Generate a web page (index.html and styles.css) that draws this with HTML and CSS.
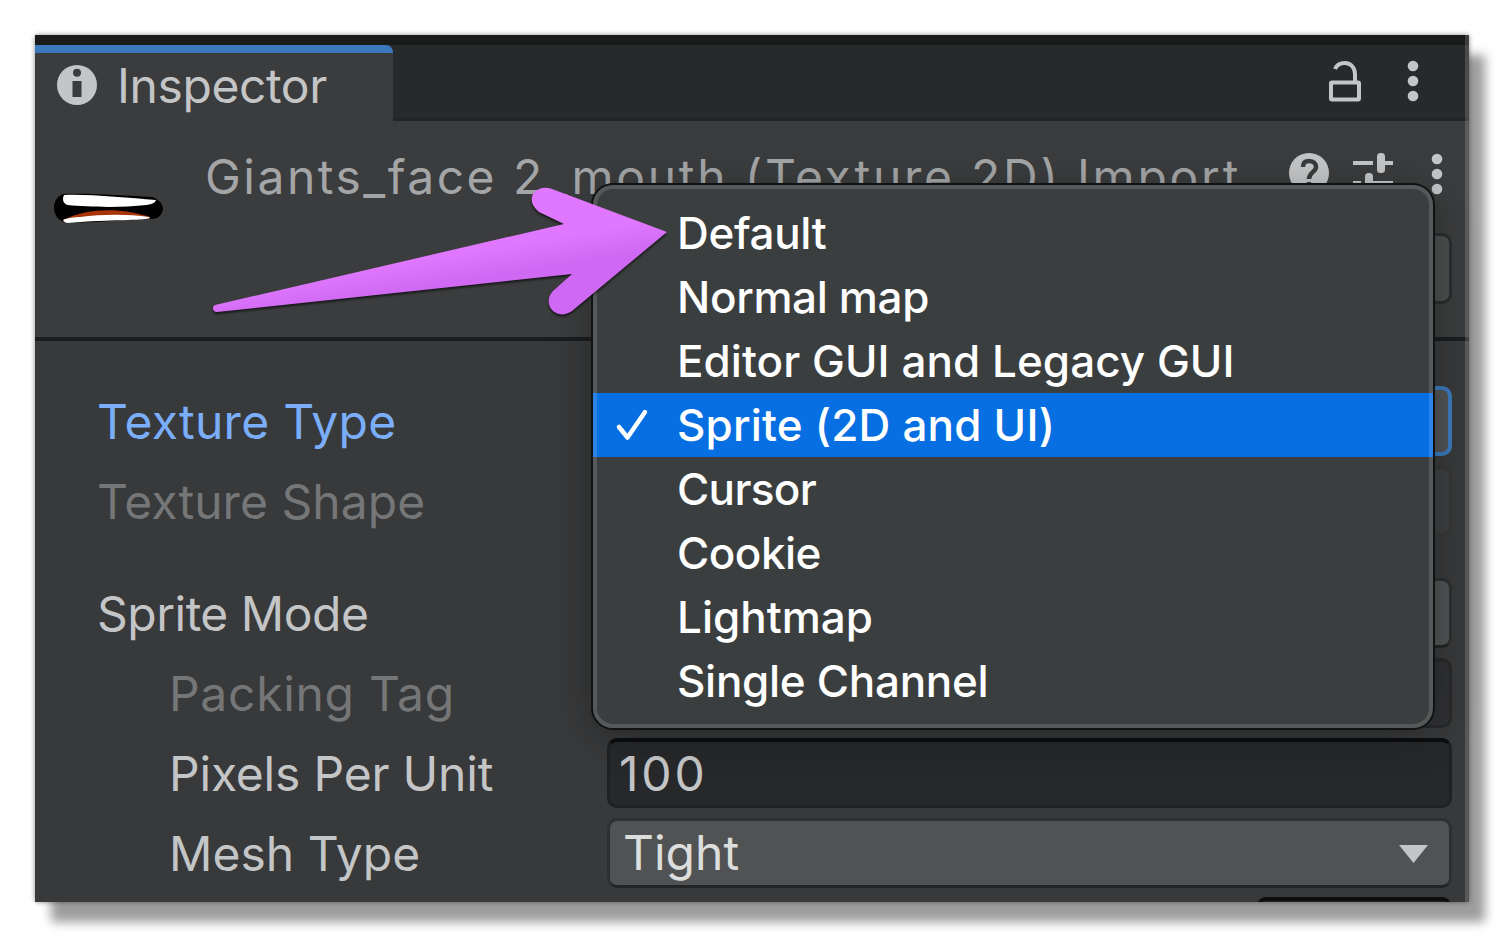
FILE: index.html
```html
<!DOCTYPE html>
<html lang="en">
<head>
<meta charset="utf-8">
<title>Inspector</title>
<link rel="stylesheet" href="styles.css">
</head>
<body>
<main class="panel">
  <nav class="tabs">
    <div class="tab">
      <svg class="info" width="40" height="40" viewBox="0 0 40 40"><circle cx="20" cy="20" r="20" fill="#c4c5c6"/><circle cx="20" cy="7.800" r="4" fill="#3a3b3c"/><path d="M15.500 16H24.500V32H15.500Z" fill="#3a3b3c"/></svg>
      <span class="t-inspector">Inspector</span>
    </div>
    <div class="tools">
      <svg width="34" height="42" viewBox="0 0 34 42" fill="none" stroke="#c4c5c6" stroke-width="4"><rect x="3" y="22.500" width="28" height="17" rx="1"/><path d="M7 9C9 4 13 3 17 3C23 3 27 8 27 14V22"/></svg>
      <svg width="12" height="42" viewBox="0 0 12 42" fill="#c4c5c6"><circle cx="6" cy="6" r="5.300"/><circle cx="6" cy="21" r="5.300"/><circle cx="6" cy="36" r="5.300"/></svg>
    </div>
  </nav>
  <header class="head">
    <svg class="thumb" width="112" height="34" viewBox="0 0 112 34"><path d="M11 2C40 1 74 4 100 5C106 8 110 12 110 17C109 24 104 27 98 27C70 27 40 32 12 30C5 29 1 22 1 16C1 9 5 3 11 2Z" fill="#000"/><path d="M11 3C38 2 74 6 103 8C102 11 99 12 94 13C66 16 35 15 15 13C10 12 9 7 11 3Z" fill="#fff"/><path d="M10 28C36 15 70 16 97 25L96 27C65 25 38 28 11 30Z" fill="#a83408"/><path d="M10 28C14 26 22 25 27 25C50 22 76 22 96 25L97 26C88 29 60 27 15 31C13 31 11 30 10 28Z" fill="#fff"/></svg>
    <span class="title"><span class="t-face">Giants_face </span>2_mouth (Texture 2D) Import</span>
    <div class="headicons">
      <svg width="40" height="40" viewBox="0 0 40 40"><circle cx="20" cy="20" r="20" fill="#c4c5c6"/><path d="M14 14C14 8 18 8 20 8C25 8 27 11 27 14C27 19 20 19 20 26M20 29V34" fill="none" stroke="#3a3b3c" stroke-width="4.500"/></svg>
      <svg width="40" height="40" viewBox="0 0 40 40" fill="#c4c5c6"><path d="M0 8H20V12H0ZM31 8H40V12H31ZM0 28H8V32H0ZM20 28H40V32H20Z"/><rect x="24" y="0" width="8" height="20" rx="3.500"/><rect x="12" y="20" width="8" height="20" rx="3.500"/></svg>
      <svg width="12" height="42" viewBox="0 0 12 42" fill="#c4c5c6"><circle cx="6" cy="6" r="5.300"/><circle cx="6" cy="21" r="5.300"/><circle cx="6" cy="36" r="5.300"/></svg>
    </div>
    <div class="open"></div>
  </header>
  <section class="props">
    <div class="row"><span class="label active l-type">Texture Type</span><div class="drop focus"></div></div>
    <div class="row"><span class="label dim l-shape">Texture Shape</span><div class="drop off"></div></div>
    <div class="row group"><span class="label l-mode">Sprite Mode</span><div class="drop"></div></div>
    <div class="row sub"><span class="label dim l-tag">Packing Tag</span><div class="field off"></div></div>
    <div class="row sub"><span class="label l-ppu">Pixels Per Unit</span><div class="field">100</div></div>
    <div class="row sub"><span class="label l-mesh">Mesh Type</span><div class="drop">Tight<svg class="caret" width="29" height="18" viewBox="0 0 29 18"><path d="M0 0H29L14.500 18Z" fill="#c4c5c6"/></svg></div></div>
    <div class="row last"><div class="field small"></div></div>
  </section>
  <i class="edge"></i>
</main>
<ul class="menu">
  <li class="m-default">Default</li>
  <li class="m-normal">Normal map</li>
  <li class="m-editor">Editor GUI and Legacy GUI</li>
  <li class="sel"><svg class="check" width="34" height="34" viewBox="0 0 34 34"><path d="M4 19L12.500 29.500L30 4" fill="none" stroke="#fff" stroke-width="4.500" stroke-linecap="round" stroke-linejoin="round"/></svg>Sprite (2D and UI)</li>
  <li class="m-cursor">Cursor</li>
  <li class="m-cookie">Cookie</li>
  <li class="m-light">Lightmap</li>
  <li class="m-single">Single Channel</li>
</ul>
<svg class="arrow" width="470" height="150" viewBox="205 180 470 150">
  <defs><linearGradient id="pink" gradientUnits="userSpaceOnUse" x1="429.500" y1="257" x2="434.500" y2="287"><stop offset="0" stop-color="#e078ff"/><stop offset="1" stop-color="#cf68f2"/></linearGradient></defs>
  <path d="M215 305L564 224L539 212C523 199 536 183 552 189L667 232L572 311C556 322 541 304 553 291L572 274L217 312C212 312 212 306 215 305Z" fill="url(#pink)"/>
</svg>
</body>
</html>
```
FILE: styles.css
```css
* { box-sizing: border-box; }
body {
  margin: 0;
  padding: 35px;
  height: 952px;
  overflow: hidden;
  background: #fff;
  font-family: Inter, "Liberation Sans", sans-serif;
  font-size: 48px;
  color: #c4c5c6;
}
.panel {
  position: relative;
  width: 1434px;
  height: 867px;
  background: #38393a;
  border-top: 10px solid #191b1b;
  box-shadow: 0 0 5px rgba(0, 0, 0, .45), 16px 20px 10px #9d9d9d;
  clip-path: polygon(-20px -20px, 1490px -20px, 1490px 950px, 0 950px, 0 867px, -20px 867px);
  display: flex;
  flex-direction: column;
}
.tabs {
  height: 76px;
  flex: none;
  display: flex;
  justify-content: space-between;
  background: #28292b;
  border-bottom: 3px solid #222324;
}
.tab {
  width: 358px;
  height: 76px;
  flex: none;
  display: flex;
  align-items: center;
  gap: 20px;
  padding: 0 0 3px 22px;
  border-top: 8px solid #3a79bb;
  border-top-right-radius: 7px;
  background: #3b3c3d;
}
.info { margin-top: -2px; }
.t-inspector { letter-spacing: -.4px; }
.tools { display: flex; gap: 45px; padding: 15px 50px 0 0; }
.head {
  height: 220px;
  flex: none;
  position: relative;
  display: flex;
  align-items: flex-start;
  background: #3b3c3d;
  border-bottom: 4px solid #1b1c1e;
}
.thumb { margin: 71px 0 0 18px; flex: none; }
.title {
  width: 1084px;
  flex: none;
  margin-left: 40px;
  line-height: 60px;
  padding-top: 26px;
  white-space: nowrap;
  color: #a4a5a6;
  letter-spacing: 2.75px;
}
.t-face { letter-spacing: 2.5px; }
.headicons { display: flex; flex: none; gap: 24px; padding-top: 32px; }
.headicons svg:last-child { margin-left: 14px; }
.open {
  position: absolute;
  right: 17px;
  top: 112px;
  width: 300px;
  height: 71px;
  background: #4c4d4e;
  border: 3px solid #2b2c2d;
  border-radius: 10px;
}
.props { padding: 40px 17px 0 62px; flex: 1; overflow: hidden; }
.row { height: 80px; display: flex; align-items: center; }
.label {
  width: 510px;
  flex: none;
  white-space: nowrap;
}
.sub .label { padding-left: 72px; }
.group { margin-top: 32px; }
.l-type { letter-spacing: .25px; }
.l-shape { letter-spacing: .05px; }
.l-mode { letter-spacing: -.5px; }
.l-tag { letter-spacing: .7px; }
.l-ppu { letter-spacing: -.2px; }
.l-mesh { letter-spacing: .05px; }
.active { color: #7baefa; }
.dim { color: #757677; }
.drop, .field {
  position: relative;
  width: 845px;
  height: 70px;
  border-radius: 10px;
  line-height: 64px;
}
.drop {
  padding-left: 13px;
  background: #515253;
  border: 3px solid #2e2f31;
  border-bottom-color: #232425;
  color: #dcdddd;
}
.field {
  background: #27282a;
  border: 3px solid #202122;
  border-top: 4px solid #0c0d0e;
  padding-left: 9px;
  letter-spacing: 2.8px;
}
.focus { border: 4px solid #3a79bb; }
.drop.off { background: #3d3e3f; border-color: #353637; }
.field.off { background: #303133; border-color: #28292a; }
.small { width: 196px; margin-left: auto; }
.last { align-items: flex-start; padding-top: 4px; }
.caret { position: absolute; right: 21px; top: 24px; }
.edge {
  position: absolute;
  right: 0;
  top: -10px;
  width: 4px;
  height: 867px;
  background: rgba(255, 255, 255, .16);
}
.menu {
  position: absolute;
  left: 593px;
  top: 185px;
  width: 840px;
  height: 543px;
  margin: 0;
  padding: 16px 0;
  list-style: none;
  background: #3b3e3e;
  border-radius: 20px;
  box-shadow: 0 0 0 2px #111213, 0 8px 40px rgba(0, 0, 0, .3);
  color: #fff;
  font-size: 44px;
  font-weight: 500;
}
.menu::after {
  content: "";
  position: absolute;
  inset: 0;
  border: 4px solid rgba(255, 255, 255, .14);
  border-radius: 20px;
}
.menu li {
  height: 64px;
  display: flex;
  align-items: center;
  padding-left: 84px;
  white-space: nowrap;
}
.menu .m-default { letter-spacing: -.35px; }
.menu .m-normal { letter-spacing: -.35px; }
.menu .m-editor { letter-spacing: .05px; }
.menu .m-cursor { letter-spacing: -.65px; }
.menu .m-cookie { letter-spacing: -.5px; }
.menu .m-light { letter-spacing: 0; }
.menu .m-single { letter-spacing: -.3px; }
.menu .sel { background: #076fe1; padding-left: 22px; letter-spacing: .2px; }
.check { width: 34px; margin-right: 28px; }
.arrow {
  position: absolute;
  left: 205px;
  top: 180px;
  filter: drop-shadow(0 2px 1px rgba(0, 0, 0, .6));
}
```
